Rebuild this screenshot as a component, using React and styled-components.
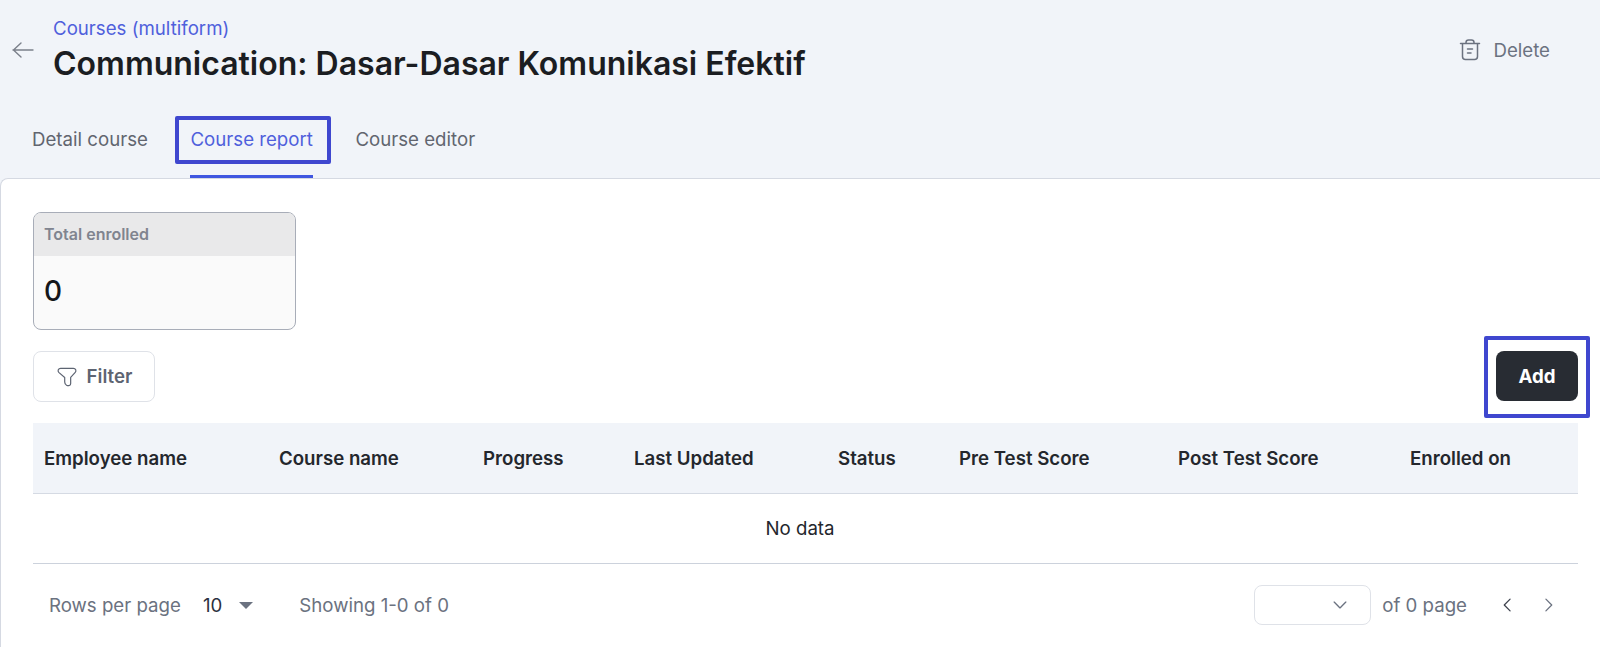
import React from "react";
import styled, { createGlobalStyle } from "styled-components";

const Global = createGlobalStyle`
  html, body { margin: 0; padding: 0; background: #f1f4f9; }
  body { font-family: Inter, "Liberation Sans", sans-serif; overflow: hidden; }
  #root { width: 1600px; height: 647px; }
`;

const Page = styled.div`
  width: 1600px;
  height: 647px;
  display: flex;
  flex-direction: column;
  background: #f1f4f9;
  overflow: hidden;
`;
const Header = styled.header`
  height: 106px;
  display: flex;
  padding: 17px 50px 0 11px;
  box-sizing: border-box;
`;
const BackButton = styled.div`
  width: 24px;
  height: 24px;
  margin: 21px 18px 0 0;
  color: #7b808b;
`;
const Heading = styled.div`
  flex: 1;
  display: flex;
  flex-direction: column;
`;
const Crumb = styled.div`
  font-size: 18.67px;
  line-height: 24px;
  color: #4f5fdc;
`;
const Title = styled.h1`
  margin: 3px 0 0;
  font-size: 32px;
  line-height: 40px;
  font-weight: 600;
  color: #1b1d22;
`;
const DeleteAction = styled.div`
  display: flex;
  align-items: center;
  gap: 11px;
  height: 24px;
  margin-top: 21px;
  font-size: 18.67px;
  color: #6b7280;
`;
const Tabs = styled.nav`
  height: 72px;
  display: flex;
  gap: 42.5px;
  padding: 0 0 0 32px;
  box-sizing: border-box;
`;
const Tab = styled.div`
  position: relative;
  height: 72px;
  padding-top: 22px;
  box-sizing: border-box;
  font-size: 18.67px;
  line-height: 24px;
  color: ${(p) => (p.$active ? "#4f5fdc" : "#61656f")};
  border-bottom: 3px solid ${(p) => (p.$active ? "#3f56e0" : "transparent")};
`;
const Highlight = styled.span`
  position: absolute;
  border: 4px solid #3f47cf;
  border-radius: 2px;
  box-sizing: border-box;
  pointer-events: none;
`;
const TabHighlight = styled(Highlight)`
  left: -15px;
  right: -18px;
  top: 10px;
  height: 48px;
`;
const Panel = styled.main`
  flex: 1;
  background: #fff;
  border: 1px solid #d5d9e2;
  border-right: none;
  border-bottom: none;
  border-radius: 8px 0 0 0;
  padding: 33px 22px 0 32px;
  display: flex;
  flex-direction: column;
`;
const StatCard = styled.section`
  width: 263px;
  height: 118px;
  box-sizing: border-box;
  border: 1px solid #a8adb8;
  border-radius: 8px;
  overflow: hidden;
  background: #fafafa;
  display: flex;
  flex-direction: column;
`;
const StatLabel = styled.div`
  height: 43px;
  background: #e9e9ea;
  padding: 0 10px 2px;
  box-sizing: border-box;
  display: flex;
  align-items: center;
  font-size: 16px;
  font-weight: 600;
  color: #80848f;
`;
const StatValue = styled.div`
  flex: 1;
  padding: 0 10px 3px;
  display: flex;
  align-items: center;
  font-size: 28px;
  font-weight: 500;
  color: #14161a;
`;
const Toolbar = styled.div`
  display: flex;
  justify-content: space-between;
  margin-top: 21px;
`;
const FilterButton = styled.div`
  width: 122px;
  height: 51px;
  box-sizing: border-box;
  border: 1px solid #dfe2e8;
  border-radius: 8px;
  display: flex;
  align-items: center;
  justify-content: center;
  gap: 9px;
  font-size: 18.67px;
  font-weight: 600;
  color: #5d6472;
`;
const AddWrap = styled.div`
  position: relative;
`;
const AddButton = styled.div`
  width: 82px;
  height: 50px;
  border-radius: 8px;
  background: #282c33;
  color: #fff;
  font-size: 18.67px;
  font-weight: 700;
  display: flex;
  align-items: center;
  justify-content: center;
`;
const AddHighlight = styled(Highlight)`
  left: -12px;
  right: -12px;
  top: -15px;
  bottom: -16px;
`;
const HeadRow = styled.div`
  margin-top: 21px;
  height: 71px;
  display: grid;
  grid-template-columns: 235px 204px 151px 204px 121px 219px 232px 178px;
  align-items: center;
  background: #f1f4f9;
  border-bottom: 1px solid #d5dae3;
  box-sizing: border-box;
`;
const HeadCell = styled.div`
  padding-left: 11px;
  font-size: 18.67px;
  font-weight: 600;
  color: #24272d;
`;
const EmptyRow = styled.div`
  height: 70px;
  display: flex;
  align-items: center;
  justify-content: center;
  padding-right: 11px;
  border-bottom: 1px solid #ccd2dc;
  box-sizing: border-box;
  font-size: 18.67px;
  color: #24272d;
`;
const Footer = styled.footer`
  display: flex;
  align-items: center;
  justify-content: space-between;
  height: 82px;
  padding: 0 20px 0 16px;
`;
const FooterGroup = styled.div`
  display: flex;
  align-items: center;
`;
const Muted = styled.span`
  font-size: 18.67px;
  color: #6b7280;
`;
const RowsValue = styled.span`
  margin-left: 22px;
  font-size: 18.67px;
  color: #2b3040;
`;
const Caret = styled.span`
  margin: 0 46px 0 17px;
  width: 0;
  height: 0;
  border-left: 7px solid transparent;
  border-right: 7px solid transparent;
  border-top: 7px solid #6b7280;
`;
const PageSelect = styled.div`
  width: 117px;
  height: 40px;
  box-sizing: border-box;
  border: 1px solid #dfe2e8;
  border-radius: 8px;
  margin-right: 11px;
  display: flex;
  align-items: center;
  justify-content: flex-end;
  padding-right: 20px;
  color: #6b7280;
`;
const PagerIcon = styled.span`
  display: flex;
  margin-left: ${(p) => p.$gap}px;
  color: ${(p) => p.$color};
`;

const Icon = ({ size = 24, children, sw = 1.5 }) => (
  <svg width={size} height={size} viewBox="0 0 24 24" fill="none" stroke="currentColor" strokeWidth={sw} strokeLinecap="round" strokeLinejoin="round">{children}</svg>
);

const columns = ["Employee name", "Course name", "Progress", "Last Updated", "Status", "Pre Test Score", "Post Test Score", "Enrolled on"];

export default function App() {
  return (
    <Page>
      <Global />
      <Header>
        <BackButton>
          <Icon sw={1.4}><path d="M22 12H2M10 5l-7.5 7 7.5 7" /></Icon>
        </BackButton>
        <Heading>
          <Crumb>Courses (multiform)</Crumb>
          <Title>Communication: Dasar-Dasar Komunikasi Efektif</Title>
        </Heading>
        <DeleteAction>
          <Icon>
            <path d="M2.5 5.5h19M8 5V4.5a2.5 2.5 0 0 1 2.5-2.5h3A2.5 2.5 0 0 1 16 4.5V5" />
            <path d="M4.5 6v12.5a3 3 0 0 0 3 3h9a3 3 0 0 0 3-3V6" />
            <path d="M9.5 11h5M9.5 15h3.5" />
          </Icon>
          Delete
        </DeleteAction>
      </Header>
      <Tabs>
        <Tab>Detail course</Tab>
        <Tab $active>
          Course report
          <TabHighlight />
        </Tab>
        <Tab>Course editor</Tab>
      </Tabs>
      <Panel>
        <StatCard>
          <StatLabel>Total enrolled</StatLabel>
          <StatValue>0</StatValue>
        </StatCard>
        <Toolbar>
          <FilterButton>
            <Icon size={22} sw={1.3}>
              <path d="M5 2.500h14c2.500 0 3.500 3 2 4.500l-5 5.500v6.500c0 2.500-2.500 3-4.500 2-1.500-.8-2-1.800-2-3.500v-5L3 7C1.500 5.500 2.500 2.500 5 2.500z" />
            </Icon>
            Filter
          </FilterButton>
          <AddWrap>
            <AddButton>Add</AddButton>
            <AddHighlight />
          </AddWrap>
        </Toolbar>
        <HeadRow>
          {columns.map((c) => <HeadCell key={c}>{c}</HeadCell>)}
        </HeadRow>
        <EmptyRow>No data</EmptyRow>
        <Footer>
          <FooterGroup>
            <Muted>Rows per page</Muted>
            <RowsValue>10</RowsValue>
            <Caret />
            <Muted>Showing 1-0 of 0</Muted>
          </FooterGroup>
          <FooterGroup>
            <PageSelect>
              <Icon size={20} sw={1.6}><path d="M5 8.500l7 7 7-7" /></Icon>
            </PageSelect>
            <Muted>of 0 page</Muted>
            <PagerIcon $gap={31} $color="#3d424d">
              <Icon size={20} sw={1.5}><path d="M14.500 5l-7 7 7 7" /></Icon>
            </PagerIcon>
            <PagerIcon $gap={20} $color="#6b7280">
              <Icon size={20} sw={1.5}><path d="M9.500 5l7 7-7 7" /></Icon>
            </PagerIcon>
          </FooterGroup>
        </Footer>
      </Panel>
    </Page>
  );
}
